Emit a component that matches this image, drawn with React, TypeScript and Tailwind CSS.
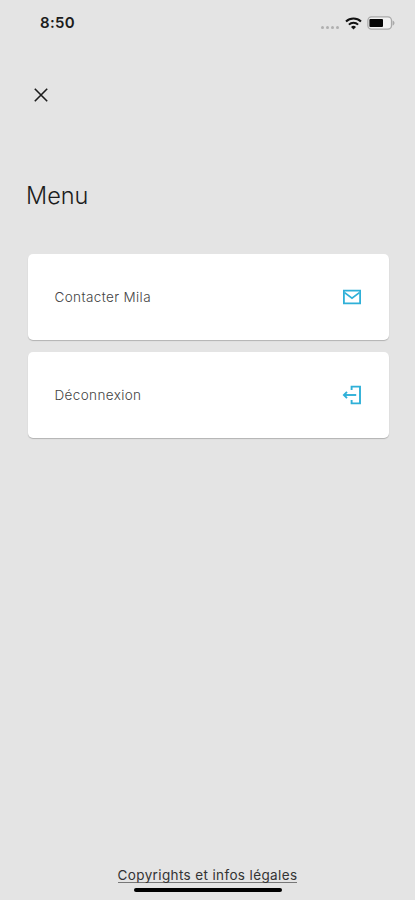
import type { ReactNode } from "react"

interface MenuItem {
  label: string
  icon: ReactNode
}

const MailIcon = () => (
  <svg width="20" height="16" viewBox="0 0 20 16" fill="none" stroke="#2fb0d8" strokeWidth="1.8">
    <path d="M1.9 1.6h16.2v12.8H1.9z" />
    <path d="M2.6 3.6l7.4 5.6 7.4-5.6" />
  </svg>
)

const LogoutIcon = () => (
  <svg width="20" height="20" viewBox="0 0 20 20" fill="none" stroke="#2fb0d8" strokeWidth="1.9">
    <path d="M9.6 5V1.6h8.4v16.8H9.6V15" />
    <path d="M14.2 10H2" />
    <path d="M5 6.9L1.9 10 5 13.1" />
  </svg>
)

const WifiIcon = () => (
  <svg width="17" height="13" viewBox="0 0 17 13" fill="none" stroke="#111111" strokeWidth="2">
    <path d="M1 4.5a10.8 10.8 0 0 1 15 0" />
    <path d="M3.9 7.6a6.6 6.6 0 0 1 9.2 0" />
    <path d="M8.5 12.4L6 9.9a3.6 3.6 0 0 1 5 0z" fill="#111111" stroke="none" />
  </svg>
)

const BatteryIcon = () => (
  <svg width="28" height="14" viewBox="0 0 28 14" fill="none">
    <rect x="0.9" y="0.9" width="23.6" height="12.2" rx="3.6" fill="#f1f1f1" stroke="#a9a9a9" strokeWidth="1.3" />
    <rect x="2.4" y="3" width="13.6" height="8" rx="1" fill="#050505" />
    <path d="M25.6 4.4v5.2c1.2-.4 1.9-1.4 1.9-2.6s-.7-2.2-1.9-2.6z" fill="#a9a9a9" />
  </svg>
)

const items: MenuItem[] = [
  { label: "Contacter Mila", icon: <MailIcon /> },
  { label: "Déconnexion", icon: <LogoutIcon /> },
]

export default function App() {
  return (
    <div className="flex h-[900px] w-[415px] flex-col overflow-hidden bg-[#e4e4e4] font-['Inter',sans-serif] text-[#1c1c1c]">
      {/* Status bar */}
      <div className="flex h-[46px] items-center justify-between pr-[20px] pl-[40px]">
        <span className="text-[15px] leading-[16px] font-semibold tracking-[0.3px]">8:50</span>
        <div className="flex items-center">
          <div className="mt-[8px] mr-[6px] flex gap-[2px]">
            {[0, 1, 2, 3].map((dot) => (
              <span key={dot} className="h-[3px] w-[3px] rounded-full bg-[#b0b0b0]" />
            ))}
          </div>
          <WifiIcon />
          <div className="ml-[5px]">
            <BatteryIcon />
          </div>
        </div>
      </div>

      {/* Close */}
      <button aria-label="Fermer" className="mt-[42px] ml-[34px] h-[14px] w-[14px]">
        <svg width="14" height="14" viewBox="0 0 14 14" fill="none" stroke="#1c1c1c" strokeWidth="1.6">
          <path d="M0.8 0.8l12.4 12.4M13.2 0.8L0.8 13.2" />
        </svg>
      </button>

      <h1 className="mt-[78px] ml-[26px] text-[23.5px] leading-[32px] font-light">Menu</h1>

      {/* Menu entries */}
      <div className="mt-[42px] ml-[27.5px] flex w-[361px] flex-col gap-[12px]">
        {items.map((item) => (
          <button
            key={item.label}
            className="flex h-[86px] items-center justify-between rounded-[5px] bg-white px-[27px] shadow-[0_1px_1px_rgba(0,0,0,0.22)]"
          >
            <span className="text-[13.5px] font-light tracking-[0.38px] text-[#444444]">{item.label}</span>
            {item.icon}
          </button>
        ))}
      </div>

      {/* Footer */}
      <div className="mt-auto flex flex-col items-center">
        <a className="border-b border-[#777777] text-[13.5px] leading-[14px] font-normal tracking-[0.37px] text-[#333333]">
          Copyrights et infos légales
        </a>
        <div className="mt-[5px] mb-[8px] h-[4px] w-[148px] rounded-full bg-black" />
      </div>
    </div>
  )
}
